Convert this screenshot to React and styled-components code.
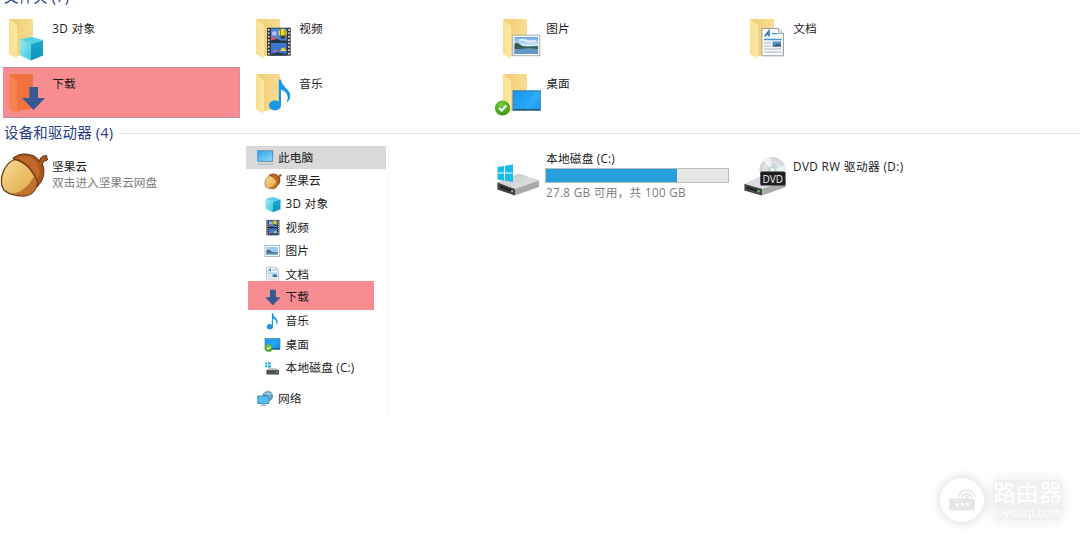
import React from "react";
import styled, { createGlobalStyle } from "styled-components";

const Global = createGlobalStyle`
  * { box-sizing: border-box; }
  body { margin: 0; background: #fff; overflow: hidden; }
  svg { display: block; flex: none; }
`;

const Page = styled.main`
  position: relative;
  display: flex;
  flex-direction: column;
  width: 1080px;
  height: 540px;
  overflow: hidden;
  background: #fff;
  color: #1a1a1a;
  font-family: "Open Sans", "Noto Sans CJK SC", sans-serif;
  font-size: 11.7px;
`;

const SectionTitle = styled.h2`
  display: flex;
  align-items: center;
  gap: 6px;
  flex: none;
  height: 20px;
  margin: ${(p) => p.$top}px 0 0;
  padding-left: 4px;
  color: #2b3c86;
  font-size: 14.5px;
  font-weight: 400;
  line-height: 20px;
  letter-spacing: 0.15px;
  white-space: nowrap;
`;

const Rule = styled.span`
  flex: 1;
  height: 1px;
  background: #e2e4ea;
`;

const FolderGrid = styled.div`
  display: grid;
  grid-template-columns: repeat(4, 247px);
  grid-template-rows: 55px 51px;
  flex: none;
  margin-top: 5px;
`;

const Tile = styled.div`
  display: flex;
  align-items: flex-start;
  height: 51px;
  width: ${(p) => (p.$selected ? "237px" : "auto")};
  margin-left: ${(p) => (p.$selected ? "3px" : 0)};
  background: ${(p) => (p.$selected ? "#f78d91" : "transparent")};
  box-shadow: ${(p) => (p.$selected ? "inset 0 1px #b58ba6, inset 0 -1px #b58ba6, inset -1px 0 #dc8b9b" : "none")};
  > svg { margin-left: ${(p) => (p.$selected ? "-3px" : 0)}; }
`;

const Label = styled.span`
  line-height: 16px;
  white-space: nowrap;
  letter-spacing: ${(p) => p.$track || 0}px;
`;

const TileLabel = styled(Label)`
  margin: 8px 0 0 0.3px;
`;

const Muted = styled(Label)`
  color: #7b7b7b;
`;

const Drives = styled.div`
  display: grid;
  grid-template-columns: 246px 248px 247px 247px;
  align-items: start;
  flex: none;
`;

const Drive = styled.div`
  display: flex;
`;

const DriveText = styled.div`
  display: flex;
  flex-direction: column;
  padding-top: ${(p) => p.$top}px;
`;

const Meter = styled.div`
  width: 184px;
  height: 15px;
  margin: 2px 0 1px -1px;
  border: 1px solid #bcbcbc;
  background: #e6e6e6;
`;

const MeterFill = styled.div`
  width: ${(p) => p.$value}%;
  height: 100%;
  background: #26a0da;
`;

const Tree = styled.nav`
  display: flex;
  flex-direction: column;
  width: 143px;
  height: 269px;
  margin-top: 3px;
  border-right: 1px solid #f4f4f4;
`;

const Node = styled.div`
  display: flex;
  align-items: center;
  gap: ${(p) => (p.$root ? 3 : 3.5)}px;
  flex: none;
  width: 140px;
  height: 23.4px;
  margin-top: ${(p) => p.$gap || 0}px;
  padding-left: ${(p) => (p.$root ? 11 : 18)}px;
  background: ${(p) => (p.$active ? "#d9d9d9" : "transparent")};
  > span { margin-top: -2px; }
`;

const MarkedNode = styled(Node)`
  width: 126px;
  height: 29px;
  margin: -5.4px 0 -0.2px 2px;
  padding: 4px 0 0 16px;
  background: #f78d91;
`;

const Watermark = styled.aside`
  position: absolute;
  left: 940px;
  top: 478px;
  display: flex;
  align-items: center;
  gap: 9px;
  color: #fff;
`;

const Badge = styled.div`
  display: grid;
  place-items: center;
  width: 44px;
  height: 44px;
  border-radius: 50%;
  background: #fff;
  box-shadow: 0 0 10px 2px rgba(0, 0, 0, 0.12);
`;

const Brand = styled.div`
  display: flex;
  flex-direction: column;
  background: rgba(0, 0, 0, 0.06);
  box-shadow: 0 0 10px 3px rgba(0, 0, 0, 0.06);
  border-radius: 6px;
`;

const BrandName = styled.span`
  font-size: 23px;
  line-height: 27px;
  margin-top: -1px;
`;

const BrandUrl = styled.span`
  font-size: 12px;
  line-height: 14px;
`;

const Gradients = () => (
  <svg width="0" height="0" style={{ position: "absolute" }}>
    <defs>
      <linearGradient id="back" x1="0" x2="1">
        <stop offset="0" stopColor="#f0cd70" />
        <stop offset="1" stopColor="#f8dc91" />
      </linearGradient>
      <linearGradient id="flap" x1="0" x2="1">
        <stop offset="0" stopColor="#f9de91" />
        <stop offset="1" stopColor="#fde9a9" />
      </linearGradient>
      <linearGradient id="screen" x1="0" y1="0" x2="1" y2="1">
        <stop offset="0" stopColor="#1c93ea" />
        <stop offset=".55" stopColor="#23a6f7" />
        <stop offset="1" stopColor="#0e8ce6" />
      </linearGradient>
      <linearGradient id="monitor" x1="0" y1="0" x2="1" y2="1">
        <stop offset="0" stopColor="#35a3e6" />
        <stop offset="1" stopColor="#8bdcff" />
      </linearGradient>
      <linearGradient id="cubeL" x1="0" x2="1" y2="1">
        <stop offset="0" stopColor="#9feaf3" />
        <stop offset="1" stopColor="#38c7df" />
      </linearGradient>
      <linearGradient id="cubeR" x1="0" y1="0" x2="0" y2="1">
        <stop offset="0" stopColor="#22a9ce" />
        <stop offset="1" stopColor="#0a91bd" />
      </linearGradient>
      <linearGradient id="sky" x1="0" y1="0" x2="0" y2="1">
        <stop offset="0" stopColor="#6aa5e6" />
        <stop offset=".5" stopColor="#d8ebf8" />
        <stop offset=".52" stopColor="#6fa4c5" />
        <stop offset="1" stopColor="#3b78a8" />
      </linearGradient>
      <linearGradient id="nut" x1="0" y1="0" x2="1" y2="1">
        <stop offset="0" stopColor="#f9dc92" />
        <stop offset=".6" stopColor="#eaba62" />
        <stop offset="1" stopColor="#d99a3e" />
      </linearGradient>
      <linearGradient id="metal" x1="0" y1="0" x2="1" y2="1">
        <stop offset="0" stopColor="#c6c6c8" />
        <stop offset="1" stopColor="#e7e7e9" />
      </linearGradient>
      <radialGradient id="ok" cx=".45" cy=".3" r=".8">
        <stop offset="0" stopColor="#7ace3c" />
        <stop offset="1" stopColor="#2c8f14" />
      </radialGradient>
      <radialGradient id="disc">
        <stop offset="0" stopColor="#fff" />
        <stop offset=".25" stopColor="#b8d5d9" />
        <stop offset=".6" stopColor="#e3e5e8" />
        <stop offset="1" stopColor="#cbd0d3" />
      </radialGradient>
    </defs>
  </svg>
);

const Folder = ({ hot, children }) => (
  <svg width="52" height="51" viewBox="0 0 52 51">
    <path d="M9 7H33V41.5L17 44Z" fill={hot ? "#f1713f" : "url(#back)"} />
    <path d="M9 7L16.2 13Q17 14 17 15V45.5Q17 47 15.5 46L9.8 42.5Q9 42 9 41Z" fill={hot ? "#fb8051" : "url(#flap)"} />
    {children}
  </svg>
);

const Cube = () => (
  <>
    <path d="M19.7 27.5L31 32V48.5L19.7 43Z" fill="url(#cubeL)" />
    <path d="M31 32L43 28V43.5L31 48.5Z" fill="url(#cubeR)" />
    <path d="M19.7 27.5L31.5 24.7L43 28L31 32Z" fill="#56d2e6" />
  </>
);

const Film = () => (
  <>
    <rect x="20" y="15.7" width="23.7" height="28" fill="#34333a" />
    <rect x="24" y="16.5" width="15.7" height="13" fill="#4c86dc" />
    <rect x="24" y="31" width="15.7" height="12" fill="#3c78cf" />
    <path d="M21.7 17V43.5M42 17V43.5" stroke="#e6e6e6" strokeWidth="1.7" strokeDasharray="1.7 1.7" />
    <circle cx="27.3" cy="21.5" r="2.3" fill="#b9c6ea" />
    <path d="M24 25H29L28 28H24Z" fill="#d9536c" />
    <circle cx="35.7" cy="21" r="4.2" fill="#f5d32b" />
    <path d="M33.5 17.5V23M38 17.5V23" stroke="#4a9b49" strokeWidth="1" />
    <path d="M32.5 23.5H39L37 27H34.5Z" fill="#3b3f2c" />
    <path d="M24 28.5L30 27L34 28.5H39.7V31H24Z" fill="#26343e" />
    <path d="M33 39Q36 32 39.5 39Z" fill="#f4d22f" />
    <circle cx="28.5" cy="39.5" r="1.7" fill="#bd6b9b" />
    <path d="M24 42L30 40L39.7 42V43.4H24Z" fill="#283c55" />
  </>
);

const Note = () => (
  <g fill="#1797e6">
    <ellipse cx="28" cy="38.5" rx="6" ry="5" />
    <path d="M31.8 12.5H34Q34.5 17 39 21Q47 28.5 40.5 35L39.8 34.3Q43.5 26.5 34 22.5V38.5H31.8Z" />
  </g>
);

const Photo = () => (
  <>
    <rect x="18.8" y="23.2" width="27" height="20.5" fill="#fbfbfb" stroke="#a9adb2" />
    <rect x="20.5" y="25" width="23.6" height="17" fill="url(#sky)" />
    <path d="M20.5 32Q22.5 29.5 26 32.5T35 35L44 34V37H20.5Z" fill="#365f54" />
    <path d="M25 28.5Q28 27 32 28.5T42 29" stroke="#f4f8fd" strokeWidth="2" opacity=".8" fill="none" />
    <path d="M20.5 38Q31 35 44 37V42H20.5Z" fill="#6498c4" />
  </>
);

const Sheet = () => (
  <>
    <path d="M20.9 16.5H37.5L42.4 21.5V43.8H20.9Z" fill="#fafbfc" stroke="#969b9f" />
    <path d="M37.5 16.5V21.5H42.4" fill="#dfe3e6" stroke="#969b9f" strokeWidth=".8" />
    <path d="M23.5 24.5L28 18.8V24.5M25.6 22.5H28.5" fill="none" stroke="#2f81b8" strokeWidth="1.6" />
    <path d="M31 21.7H36.5M23 27.5H40.5" stroke="#3a9bd0" strokeWidth="1.3" />
    <path d="M23 31H30M23 34H30M23 37H40.5M23 40H40.5" stroke="#aab3ba" strokeWidth="1" />
    <rect x="31.5" y="29.5" width="8.5" height="5" fill="#4b91bd" />
    <path d="M31.5 34.5L36 32L40 33V34.5Z" fill="#315d77" />
  </>
);

const Check = () => (
  <>
    <circle cx="8.5" cy="41" r="7.6" fill="url(#ok)" />
    <path d="M5 41L7.7 43.5L12.3 38.5" fill="none" stroke="#fff" strokeWidth="2.2" />
  </>
);

const Desk = () => (
  <>
    <rect x="19" y="23.8" width="27.3" height="19.5" fill="url(#screen)" stroke="#3b7ba9" />
    <path d="M30 42L42 24.5H45.8V42Z" fill="#4ab9ff" opacity=".35" />
    <path d="M19.5 42.5H46" stroke="#24516f" />
  </>
);

const Arrow = () => <path d="M29.3 20H38V31H45L33.6 43L22 31H29.3Z" fill="#38598f" />;

const folders = [
  { name: "3D 对象", art: <Cube />, track: 0.3 },
  { name: "视频", art: <Film /> },
  { name: "图片", art: <Photo /> },
  { name: "文档", art: <Sheet /> },
  { name: "下载", art: <Arrow />, selected: true },
  { name: "音乐", art: <Note /> },
  { name: "桌面", art: <><Desk /><Check /></> },
];

const Acorn = ({ width = 52, height = 60, viewBox = "0 0 52 60" }) => (
  <svg width={width} height={height} viewBox={viewBox}>
    <path d="M13 15Q22 8 34 13Q38 15 39.5 19Q39.5 13 46.5 12.5L47.5 17Q43 17 42.5 21Q46 30 41 39Q38 44 34 46Z" fill="#a9551f" stroke="#5d2d12" />
    <path d="M24 13Q38 14 40 30L36 38L18 14Z" fill="#bf692b" />
    <path d="M14.5 16.5Q29 19 37.5 38.5Q36 52 24 53Q10 53 3.5 46.5Q-1 38 4 27Q8 19 14.5 16.5Z" fill="url(#nut)" stroke="#6b3713" strokeWidth="1.3" />
    <path d="M37 39Q36 52 24 52.5Q17 52.5 11 50.5Q25 50 34 33.5Z" fill="#b86926" opacity=".85" />
  </svg>
);

const DriveC = () => (
  <svg width="52" height="60" viewBox="0 0 52 60">
    <path d="M3.5 39.5L25 31L45 37.5V44L21 52.5L3.5 46.5Z" fill="#a9a9ab" />
    <path d="M3.5 39.5L25 30.5L45 37.5L21 46Z" fill="url(#metal)" />
    <path d="M3.5 39.5L21 46V52.5L3.5 46.5Z" fill="#424443" />
    <path d="M6 43.5L18 48" stroke="#1e211f" strokeWidth="2" />
    <circle cx="18" cy="48.2" r="1.1" fill="#6ddb59" />
    <path d="M3.5 24L10 23V29.5H3.5ZM11 22.8L19 21.5V29.5H11ZM3.5 30.5H10V37.5L3.5 36.5ZM11 30.5H19V39L11 37.7Z" fill="#14bdf0" />
  </svg>
);

const DriveD = () => (
  <svg width="52" height="60" viewBox="0 0 52 60">
    <path d="M3.5 41L22 33L45 37V44L21 52.5L3.5 47.5Z" fill="#aaabac" />
    <path d="M3.5 41L22 32L45 38L21 46Z" fill="#dcdcde" />
    <path d="M3.5 41L21 46V52.5L3.5 47.5Z" fill="#464847" />
    <path d="M6 44.5L17 48" stroke="#202321" strokeWidth="2" />
    <circle cx="17.5" cy="48.3" r="1.2" fill="#5ed04e" />
    <circle cx="31.5" cy="27" r="13" fill="url(#disc)" />
    <path d="M31.5 27L22 18A13 13 0 0 1 29 14.3ZM31.5 27L43.5 22A13 13 0 0 1 44 30Z" fill="#fff" opacity=".6" />
    <circle cx="31.5" cy="27" r="3" fill="#f8fafa" stroke="#b3c5c8" />
    <rect x="19.3" y="28.5" width="25.2" height="14" rx="1.5" fill="#1f1f20" />
    <text x="21.5" y="39.5" fill="#f2f2f2" fontFamily="Open Sans, sans-serif" fontSize="10.5" textLength="20.5" lengthAdjust="spacingAndGlyphs">DVD</text>
  </svg>
);

const Small = ({ box = "18 14 28 31", children }) => (
  <svg width="18" height="17" viewBox={box}>{children}</svg>
);

const TinyPhoto = () => (
  <svg width="18" height="17" viewBox="0 0 18 17">
    <rect x="1" y="2.5" width="14.5" height="11" fill="#fafcfd" stroke="#9fa8af" strokeWidth=".8" />
    <path d="M2.5 4H14V12H2.5Z" fill="#9ccbed" />
    <path d="M2.5 7Q6 6 8 9L14 9.5V12H2.5Z" fill="#3f6f86" />
    <path d="M2.5 10.5H14V12H2.5Z" fill="#7fb4d6" />
  </svg>
);

const Pc = () => (
  <svg width="18" height="17" viewBox="0 0 18 17">
    <rect x=".8" y="1.8" width="15" height="10.5" fill="url(#monitor)" stroke="#3d83b5" strokeWidth=".8" />
    <path d="M1 15.2H16" stroke="#a9b6c0" strokeWidth="1.2" />
  </svg>
);

const TinyDrive = () => (
  <svg width="18" height="17" viewBox="0 0 18 17">
    <path d="M1 2.5H3.3V4.5H1ZM4 2.2H6.8V4.5H4ZM1 5.2H3.3V7.3H1ZM4 5.2H6.8V7.7H4Z" fill="#27b5e0" />
    <path d="M2.5 9.5L5 8H12.5L15 10V14.5H2.5Z" fill="#c5c9cb" />
    <rect x="2.5" y="10" width="12.5" height="4.5" fill="#4e5555" />
    <circle cx="13" cy="12.2" r=".8" fill="#66d17b" />
  </svg>
);

const Net = () => (
  <svg width="18" height="17" viewBox="0 0 18 17">
    <circle cx="10.8" cy="6" r="5.3" fill="#5e9dbd" />
    <path d="M7 3Q11 5 15.5 3.5M10 1Q14 6 11 11" stroke="#b8dbe6" fill="none" />
    <rect x=".8" y="6" width="11" height="7.5" fill="#55bdf0" stroke="#2e80ac" strokeWidth=".8" />
    <path d="M4 15.2H9" stroke="#819eb0" strokeWidth="1.2" />
  </svg>
);

const TinyDesk = () => (
  <svg width="18" height="17" viewBox="0 0 18 17">
    <rect x="1" y="2.5" width="15" height="11" fill="url(#screen)" stroke="#2c76a5" strokeWidth=".6" />
    <path d="M7 12.7H16" stroke="#1f597d" />
    <circle cx="4.7" cy="12" r="3.8" fill="url(#ok)" />
    <path d="M2.9 12L4.3 13.3L6.7 10.7" fill="none" stroke="#fff" strokeWidth="1.1" />
  </svg>
);

const App = () => (
  <Page>
    <Global />
    <Gradients />
    <SectionTitle $top={-13}>文件夹 (7)</SectionTitle>
    <FolderGrid>
      {folders.map((f) => (
        <Tile key={f.name} $selected={f.selected}>
          <Folder hot={f.selected}>{f.art}</Folder>
          <TileLabel $track={f.track}>{f.name}</TileLabel>
        </Tile>
      ))}
    </FolderGrid>
    <SectionTitle $top={5}>
      设备和驱动器 (4)
      <Rule />
    </SectionTitle>
    <Drives>
      <Drive>
        <Acorn />
        <DriveText $top={15}>
          <Label>坚果云</Label>
          <Muted>双击进入坚果云网盘</Muted>
        </DriveText>
      </Drive>
      <Tree>
        <Node $root $active><Pc /><Label>此电脑</Label></Node>
        <Node><Acorn width={18} height={17} viewBox="-1 9 50 47" /><Label>坚果云</Label></Node>
        <Node><Small box="18 23 26.5 26.500"><Cube /></Small><Label $track={0.3}>3D 对象</Label></Node>
        <Node><Small><Film /></Small><Label>视频</Label></Node>
        <Node><TinyPhoto /><Label>图片</Label></Node>
        <Node><Small box="18.5 14.5 28 31"><Sheet /></Small><Label>文档</Label></Node>
        <MarkedNode><Small box="20.5 19 26.5 25"><Arrow /></Small><Label>下载</Label></MarkedNode>
        <Node><Small box="18 12 32 33"><Note /></Small><Label>音乐</Label></Node>
        <Node><TinyDesk /><Label>桌面</Label></Node>
        <Node><TinyDrive /><Label $track={0.2}>本地磁盘 (C:)</Label></Node>
        <Node $root $gap={7}><Net /><Label>网络</Label></Node>
      </Tree>
      <Drive>
        <DriveC />
        <DriveText $top={7}>
          <Label $track={0.2}>本地磁盘 (C:)</Label>
          <Meter><MeterFill $value={72} /></Meter>
          <Muted $track={0.3}>27.8 GB 可用，共 100 GB</Muted>
        </DriveText>
      </Drive>
      <Drive>
        <DriveD />
        <DriveText $top={15}>
          <Label $track={0.4}>DVD RW 驱动器 (D:)</Label>
        </DriveText>
      </Drive>
    </Drives>
    <Watermark>
      <Badge>
        <svg width="28" height="28" viewBox="0 0 28 28">
          <rect x="1" y="12.5" width="26" height="12" rx="2" fill="#e6e6e6" />
          <g fill="#fff"><circle cx="9" cy="18.5" r="1.6" /><circle cx="14.3" cy="18.5" r="1.6" /><circle cx="19.5" cy="18.5" r="1.6" /></g>
          <g fill="none" stroke="#e6e6e6" strokeWidth="1.9">
            <path d="M10.5 10.5A8.6 8.6 0 0 1 27 10.5" />
            <path d="M14 11.5A5 5 0 0 1 23.5 11.5" />
          </g>
          <circle cx="18.8" cy="11.5" r="2" fill="#e6e6e6" />
        </svg>
      </Badge>
      <Brand>
        <BrandName>路由器</BrandName>
        <BrandUrl>luyouqi.com</BrandUrl>
      </Brand>
    </Watermark>
  </Page>
);

export default App;
